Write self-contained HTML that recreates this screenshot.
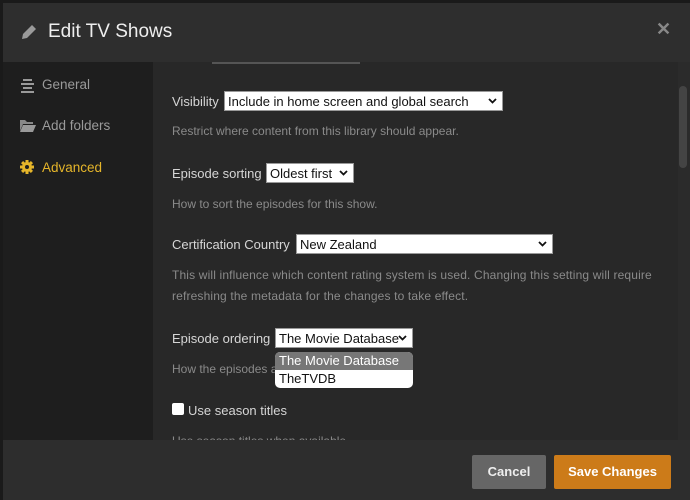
<!DOCTYPE html>
<html><head><style>
*{margin:0;padding:0;box-sizing:border-box}
body{width:690px;height:500px;overflow:hidden;background:#1a1a1a;font-family:"Liberation Sans",sans-serif;position:relative}
.a{position:absolute}
.hdr{left:3px;top:3px;width:687px;height:59px;background:#2e2e2e}
.side{left:3px;top:62px;width:150px;height:378px;background:#1e1e1e}
.main{left:153px;top:62px;width:525px;height:378px;background:#282828}
.sb{left:678px;top:62px;width:12px;height:378px;background:#2b2b2b}
.foot{left:3px;top:440px;width:687px;height:60px;background:#2d2d2d}
.lbl{color:#d6d6d6;font-size:13px}
.hint{color:#8a8a8a;font-size:12px}
.sel{background:#fff;color:#111;font-size:13px;height:20px;line-height:19px;padding-left:3px;border:1px solid #999}
.chev{position:absolute;right:5px;top:6px;width:9px;height:6px}
.nav{color:#9a9a9a;font-size:13.5px;left:42px}
</style></head><body>
<div class="a hdr"></div>
<div class="a" style="left:20px;top:23px;width:18px;height:18px"><svg width="18" height="18" viewBox="0 0 18 18"><path d="M2 16 L3 11 L12 2 L16 6 L7 15 Z" fill="#9a9a9a"/></svg></div>
<div class="a" style="left:48px;top:21px;color:#eee;font-size:19px">Edit TV Shows</div>
<div class="a" style="left:656px;top:19px;color:#888;font-size:18px;font-weight:bold">✕</div>
<div class="a side"></div>
<div class="a main"></div>
<div class="a" style="left:212px;top:62px;width:148px;height:2px;background:#555"></div>
<div class="a sb"><div style="position:absolute;left:1px;top:24px;width:8px;height:82px;background:#444;border-radius:4px"></div></div>
<div class="a" style="left:21px;top:78px;width:13px"><div style="height:2px;background:#999;margin:1px 2px 2px"></div><div style="height:2px;background:#999;margin:0 0 2px"></div><div style="height:2px;background:#999;margin:0 2px 2px"></div><div style="height:2px;background:#999"></div></div>
<div class="a nav" style="top:77px">General</div>
<div class="a" style="left:20px;top:119px"><svg width="16" height="13" viewBox="0 0 16 13"><path d="M0 1h5l2 2h6v2H3L0 12z" fill="#888"/><path d="M3 6h13l-3 7H0z" fill="#999"/></svg></div>
<div class="a nav" style="top:118px">Add folders</div>
<div class="a" style="left:20px;top:160px"><svg width="14" height="14" viewBox="0 0 14 14"><g fill="#e5b52a"><circle cx="7" cy="7" r="5"/><rect x="5.5" y="0" width="3" height="14"/><rect x="0" y="5.5" width="14" height="3"/><rect x="5.5" y="0" width="3" height="14" transform="rotate(45 7 7)"/><rect x="5.5" y="0" width="3" height="14" transform="rotate(-45 7 7)"/></g><circle cx="7" cy="7" r="2" fill="#1e1e1e"/></svg></div>
<div class="a nav" style="top:160px;color:#e5b52a">Advanced</div>

<div class="a lbl" style="left:172px;top:94px">Visibility</div>
<div class="a sel" style="left:224px;top:91px;width:279px">Include in home screen and global search<svg class="chev" viewBox="0 0 9 6"><path d="M1 1l3.5 3.5L8 1" stroke="#111" stroke-width="1.8" fill="none"/></svg></div>
<div class="a hint" style="left:172px;top:124px">Restrict where content from this library should appear.</div>

<div class="a lbl" style="left:172px;top:166px">Episode sorting</div>
<div class="a sel" style="left:266px;top:163px;width:88px">Oldest first<svg class="chev" viewBox="0 0 9 6"><path d="M1 1l3.5 3.5L8 1" stroke="#111" stroke-width="1.8" fill="none"/></svg></div>
<div class="a hint" style="left:172px;top:197px">How to sort the episodes for this show.</div>

<div class="a lbl" style="left:172px;top:237px">Certification Country</div>
<div class="a sel" style="left:296px;top:234px;width:257px">New Zealand<svg class="chev" viewBox="0 0 9 6"><path d="M1 1l3.5 3.5L8 1" stroke="#111" stroke-width="1.8" fill="none"/></svg></div>
<div class="a hint" style="left:172px;top:265px;line-height:21px;width:490px;letter-spacing:0.15px">This will influence which content rating system is used. Changing this setting will require refreshing the metadata for the changes to take effect.</div>

<div class="a lbl" style="left:172px;top:331px">Episode ordering</div>
<div class="a sel" style="left:275px;top:328px;width:138px">The Movie Database<svg class="chev" viewBox="0 0 9 6"><path d="M1 1l3.5 3.5L8 1" stroke="#111" stroke-width="1.8" fill="none"/></svg></div>
<div class="a hint" style="left:172px;top:362px">How the episodes a</div>
<div class="a" style="left:275px;top:352px;width:138px;height:36px;background:#fff;border-radius:5px;overflow:hidden;font-size:13px;color:#111">
<div style="background:#777;color:#fff;height:18px;line-height:18px;padding-left:4px">The Movie Database</div>
<div style="height:18px;line-height:18px;padding-left:4px">TheTVDB</div></div>

<div class="a" style="left:172px;top:403px;width:12px;height:12px;background:#fff;border-radius:2px"></div>
<div class="a lbl" style="left:188px;top:403px">Use season titles</div>
<div class="a hint" style="left:172px;top:434px;height:6px;overflow:hidden">Use season titles when available</div>

<div class="a foot"></div>
<div class="a" style="left:472px;top:455px;width:74px;height:34px;background:#666;border-radius:2px;color:#eee;font-weight:bold;font-size:13px;text-align:center;line-height:34px">Cancel</div>
<div class="a" style="left:554px;top:455px;width:117px;height:34px;background:#cc7b19;border-radius:2px;color:#fff;font-weight:bold;font-size:13px;text-align:center;line-height:34px">Save Changes</div>
</body></html>
